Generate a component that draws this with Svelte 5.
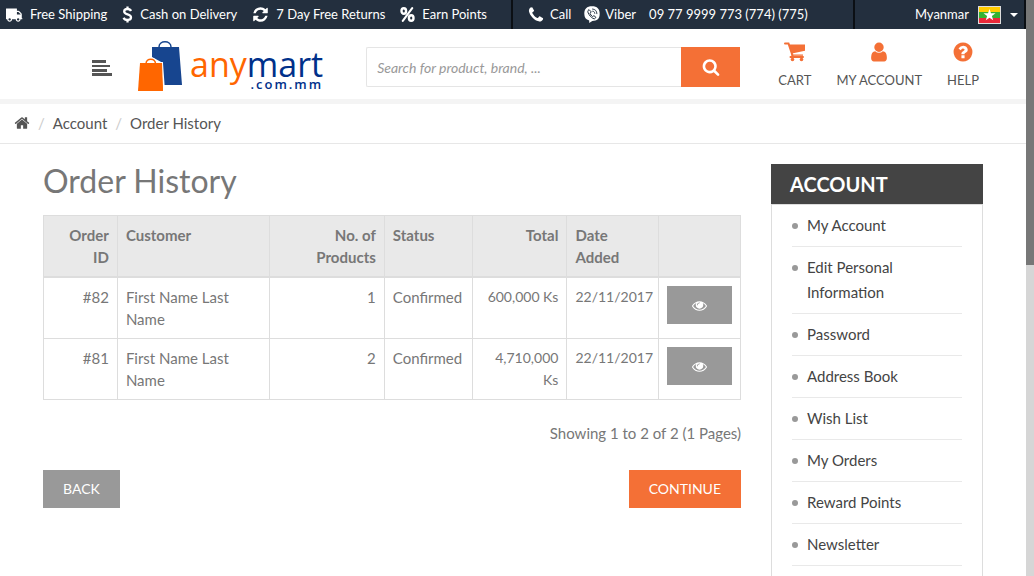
<script>
  const icons = {
    truck: 'M640 1408q0-52-38-90t-90-38-90 38-38 90 38 90 90 38 90-38 38-90zm-384-512h384v-256h-158q-13 0-22 9l-195 195q-9 9-9 22v30zm1280 512q0-52-38-90t-90-38-90 38-38 90 38 90 90 38 90-38 38-90zm256-1088v1024q0 15-4 26.5t-13.5 18.5-16.5 11.5-23.5 6-22.5 2-25.5 0-22.5-.5q0 106-75 181t-181 75-181-75-75-181h-384q0 106-75 181t-181 75-181-75-75-181h-64q-3 0-22.5.5t-25.5 0-22.5-2-23.5-6-16.5-11.5-13.5-18.5-4-26.5q0-26 19-45t45-19v-320q0-8-.5-35t0-38 2.5-34.5 6.5-37 14-30.5 22.5-30l198-198q19-19 50.5-32t58.5-13h160v-192q0-26 19-45t45-19h1024q26 0 45 19t19 45z',
    refresh: 'M1639 1056q0 5-1 7-64 268-268 434.5t-478 166.5q-146 0-282.5-55t-243.5-157l-129 129q-19 19-45 19t-45-19-19-45v-448q0-26 19-45t45-19h448q26 0 45 19t19 45-19 45l-137 137q71 66 161 102t187 36q134 0 250-65t186-179q11-17 53-117 8-23 30-23h192q13 0 22.5 9.5t9.5 22.5zm25-800v448q0 26-19 45t-45 19h-448q-26 0-45-19t-19-45 19-45l138-138q-148-137-349-137-134 0-250 65t-186 179q-11 17-53 117-8 23-30 23h-199q-13 0-22.5-9.5t-9.5-22.5v-7q65-268 270-434.5t480-166.5q146 0 284 55.5t245 156.5l130-129q19-19 45-19t45 19 19 45z',
    phone: 'M1600 1240q0 27-10 70.5t-21 68.5q-21 50-122 106-94 51-186 51-27 0-53-3.5t-57.5-12.5-47-14.5-55.5-20.5-49-18q-98-35-175-83-127-79-264-216t-216-264q-48-77-83-175-3-9-18-49t-20.5-55.5-14.5-47-12.5-57.5-3.5-53q0-92 51-186 56-101 106-122 25-11 68.5-21t70.5-10q14 0 21 3 18 6 53 76 11 19 30 54t35 63.5 31 53.5q3 4 17.5 25t21.5 35.5 7 28.5q0 20-28.5 50t-62 55-62 53-28.5 46q0 9 5 22.5t8.5 20.5 14 24 11.5 19q76 137 174 235t235 174q2 1 19 11.5t24 14 20.5 8.5 22.5 5q18 0 46-28.5t53-62 55-62 50-28.5q14 0 28.5 7t35.5 21.5 25 17.5q25 15 53.5 31t63.5 35 54 30q70 35 76 53 3 7 3 21z',
    magnifier: 'M1216 832q0-185-131.5-316.5t-316.5-131.5-316.5 131.5-131.5 316.5 131.5 316.5 316.5 131.5 316.5-131.5 131.5-316.5zm512 832q0 52-38 90t-90 38q-54 0-90-38l-343-342q-179 124-399 124-143 0-273.5-55.5t-225-150-150-225-55.5-273.5 55.5-273.5 150-225 225-150 273.5-55.5 273.5 55.5 225 150 150 225 55.5 273.5q0 220-124 399l343 343q37 37 37 90z',
    user: 'M1536 1399q0 109-62.5 187t-150.5 78h-854q-88 0-150.5-78t-62.5-187q0-85 8.5-160.5t31.5-152 58.5-131 94-89 134.5-34.5q131 128 313 128t313-128q76 0 134.5 34.5t94 89 58.5 131 31.5 152 8.5 160.5zm-256-887q0 159-112.5 271.5t-271.5 112.5-271.5-112.5-112.5-271.5 112.5-271.5 271.5-112.5 271.5 112.5 112.5 271.5z',
    help: 'M1024 1376v-192q0-14-9-23t-23-9h-192q-14 0-23 9t-9 23v192q0 14 9 23t23 9h192q14 0 23-9t9-23zm256-672q0-88-55.5-163t-138.5-116-170-41q-243 0-371 213-15 24 8 42l132 100q7 6 19 6 16 0 25-12 53-68 86-92 34-24 86-24 48 0 85.5 26t37.5 59q0 38-20 61t-68 45q-63 28-115.5 86.5t-52.5 125.5v36q0 14 9 23t23 9h192q14 0 23-9t9-23q0-19 21.5-49.5t54.5-49.5q32-18 49-28.5t46-35 44.5-48 28-60.5 12.5-81zm384 192q0 209-103 385.5t-279.5 279.5-385.5 103-385.5-103-279.5-279.5-103-385.5 103-385.5 279.5-279.5 385.5-103 385.5 103 279.5 279.5 103 385.5z',
    home: 'M1472 992v480q0 26-19 45t-45 19h-384v-384h-256v384h-384q-26 0-45-19t-19-45v-480q0-1 .5-3t.5-3l575-474 575 474q1 2 1 6zm223-69l-62 74q-8 9-21 11h-3q-13 0-21-7l-692-577-692 577q-12 8-24 7-13-2-21-11l-62-74q-8-10-7-23.5t11-21.5l719-599q32-26 76-26t76 26l244 204v-195q0-14 9-23t23-9h192q14 0 23 9t9 23v408l219 182q10 8 11 21.5t-7 23.5z',
    eye: 'M1664 960q-152-236-381-353 61 104 61 225 0 185-131.5 316.5t-316.5 131.5-316.5-131.5-131.5-316.5q0-121 61-225-229 117-381 353 133 205 333.5 326.5t434.5 121.5 434.5-121.5 333.5-326.5zm-720-384q0-20-14-34t-34-14q-125 0-214.5 89.5t-89.5 214.5q0 20 14 34t34 14 34-14 14-34q0-86 61-147t147-61q20 0 34-14t14-34zm848 384q0 34-20 69-140 230-376.5 368.5t-499.5 138.5-499.5-139-376.5-368q-20-35-20-69t20-69q140-229 376.5-368t499.5-139 499.5 139 376.5 368q20 35 20 69z'
  };

  const orders = [
    { id: '#82', customer: 'First Name Last Name', products: 1, status: 'Confirmed', total: '600,000 Ks', date: '22/11/2017' },
    { id: '#81', customer: 'First Name Last Name', products: 2, status: 'Confirmed', total: '4,710,000 Ks', date: '22/11/2017' }
  ];

  const accountLinks = [
    'My Account', 'Edit Personal Information', 'Password', 'Address Book',
    'Wish List', 'My Orders', 'Reward Points', 'Newsletter'
  ];
</script>

{#snippet icon(name, size)}
  <svg class="icon" class:flipped={name === 'truck'} width={size} height={size} viewBox="0 0 1792 1792" aria-hidden="true"><path d={icons[name]} /></svg>
{/snippet}

<div class="shell">
  <div class="page">
    <div class="topbar">
      <ul class="perks">
        <li>{@render icon('truck', 17)}Free Shipping</li>
        <li>
          <svg class="icon" width="11" height="17" viewBox="0 0 11 17" aria-hidden="true">
            <path d="M9 5C8.400 3.600 7 3 5.500 3 3.600 3 2.200 4 2.200 5.500c0 3.700 6.800 2 6.800 5.800C9 13 7.500 14 5.500 14 3.700 14 2.200 13.200 1.600 11.700M5.500 .5v2.500M5.500 14v2.500" fill="none" stroke="currentColor" stroke-width="2.300" />
          </svg>Cash on Delivery
        </li>
        <li>{@render icon('refresh', 17)}7 Day Free Returns</li>
        <li>
          <svg class="icon" width="15" height="15" viewBox="0 0 15 15" aria-hidden="true">
            <g fill="none" stroke="currentColor" stroke-width="2.400">
              <ellipse cx="3.800" cy="4" rx="2.300" ry="2.700" />
              <ellipse cx="11.200" cy="11" rx="2.300" ry="2.700" />
              <path d="M12.200 1.200 2.800 13.800" stroke-linecap="round" stroke-width="2.100" />
            </g>
          </svg>Earn Points
        </li>
      </ul>
      <div class="contact">
        <a href="#call">{@render icon('phone', 18)}Call</a>
        <a href="#viber">
          <svg class="icon" width="16" height="17" viewBox="0 0 16 17" aria-hidden="true">
            <path d="M8 .3c5.200 0 7.700 2.600 7.700 7.500S13.200 15 8.300 15L5.200 17v-2.500C1.900 13.700.3 11.400.3 7.800.3 2.900 2.800.3 8 .3z" />
            <g fill="none" stroke="#232f3e" stroke-linecap="round">
              <path d="M4.700 3.800c-1.600 1-1 2.600.4 4.800s3.300 3.800 5 4.200c1 .2 2-1.400 1.500-1.900l-1.700-1.200-1.300.9C7.300 9.700 6.400 8.600 6 7.300l1-1.100z" stroke-width="1" />
              <path d="M8.500 3c2.700.2 4.300 1.800 4.400 4.700M8.700 5.200c1.300.1 2 .9 2.100 2.200" stroke-width=".9" />
            </g>
          </svg>Viber
        </a>
        <span>09 77 9999 773 (774) (775)</span>
      </div>
      <button class="language" type="button">
        Myanmar
        <svg width="23" height="18" viewBox="0 0 23 18" aria-hidden="true">
          <path fill="#ddd" d="M0 0h23v18H0z" />
          <path fill="#fecb00" d="M1 1h21v6H1z" />
          <path fill="#34b233" d="M1 6h21v6H1z" />
          <path fill="#ea2839" d="M1 12h21v5H1z" />
          <path fill="#fff" d="m11.500 3 1.500 4.300h4.500l-3.600 2.700 1.300 4.300-3.700-2.600-3.700 2.600L9.100 10 5.500 7.300H10z" />
        </svg>
        <span class="caret"></span>
      </button>
    </div>

    <header>
      <button class="menu" type="button" aria-label="Menu">
        <svg width="21" height="17" viewBox="0 0 21 17" aria-hidden="true">
          <path d="M1 0h14v3H1zM1 5h18v2H1zM1 9h15v3H1zM1 13h20v3H1z" />
        </svg>
      </button>
      <a class="logo" href="#home" aria-label="anymart.com.mm">
        <svg width="45" height="51" viewBox="0 0 45 51" aria-hidden="true">
          <path d="M14 6h27l3 38H25V22L14 16z" fill="#17458f" />
          <path d="M21 8V6c0-7 12-7 12 0v2" fill="none" stroke="#17458f" stroke-width="1.500" />
          <path d="M0 50 2 22h22l2 28z" fill="#ff6600" stroke="#fff" stroke-width="2" />
          <path d="M8 23c0-6 9.500-6 9.500 0" fill="none" stroke="#fff" stroke-width="4" />
          <path d="M2 22h22l1 28H0z" fill="#ff6600" />
          <path d="M8 23c0-6.500 9.500-6.500 9.500 0" fill="none" stroke="#ff6600" stroke-width="1.500" />
        </svg>
        <span class="wordmark">
          <span class="name"><span class="any">any</span>mart</span>
          <span class="domain">.com.mm</span>
        </span>
      </a>
      <form class="search" onsubmit={(e) => e.preventDefault()}>
        <input type="text" aria-label="Search" placeholder="Search for product, brand, ..." />
        <button type="submit" aria-label="Search">{@render icon('magnifier', 18)}</button>
      </form>
      <nav class="shortcuts">
        <a href="#cart">
          <svg class="icon" width="22" height="22" viewBox="0 0 22 22" aria-hidden="true">
            <path d="M1 2.500h3.500L8.500 14.500M6.500 16h12.500" fill="none" stroke="currentColor" stroke-width="2" stroke-linecap="round" />
            <path d="M5 3.500h16v6.300L8 12.500zM7 13.500h12v1.300H7.500z" />
            <circle cx="8.500" cy="18.500" r="1.800" /><circle cx="17.500" cy="18.500" r="1.800" />
          </svg>
          CART
        </a>
        <a href="#account">{@render icon('user', 22)}MY ACCOUNT</a>
        <a href="#help">{@render icon('help', 22)}HELP</a>
      </nav>
    </header>

    <nav class="breadcrumb" aria-label="Breadcrumb">
      <a href="#home" aria-label="Home">{@render icon('home', 16)}</a>
      <i>/</i>
      <a href="#account">Account</a>
      <i>/</i>
      <a href="#orders">Order History</a>
    </nav>

    <div class="content">
      <main>
        <h1>Order History</h1>
        <table>
          <colgroup>
            <col class="c-id" /><col class="c-customer" /><col class="c-products" /><col class="c-status" />
            <col class="c-total" /><col class="c-date" /><col />
          </colgroup>
          <thead>
            <tr>
              <th class="end">Order ID</th>
              <th>Customer</th>
              <th class="end">No. of Products</th>
              <th>Status</th>
              <th class="end">Total</th>
              <th>Date Added</th>
              <td></td>
            </tr>
          </thead>
          <tbody>
            {#each orders as order}
              <tr>
                <td class="end">{order.id}</td>
                <td>{order.customer}</td>
                <td class="end">{order.products}</td>
                <td>{order.status}</td>
                <td class="end figures">{order.total}</td>
                <td class="figures">{order.date}</td>
                <td><a class="view" href="#order" aria-label="View">{@render icon('eye', 15)}</a></td>
              </tr>
            {/each}
          </tbody>
        </table>
        <p class="results">Showing 1 to 2 of 2 (1 Pages)</p>
        <div class="actions">
          <button class="back" type="button">BACK</button>
          <button class="continue" type="button">CONTINUE</button>
        </div>
      </main>

      <aside>
        <h2>ACCOUNT</h2>
        <ul>
          {#each accountLinks as label}
            <li><a href="#account">{label}</a></li>
          {/each}
        </ul>
      </aside>
    </div>
  </div>
  <div class="track"><div class="thumb"></div></div>
</div>

<style>
  :global(body) {
    margin: 0;
    background: #fff;
  }
  .shell {
    display: grid;
    grid-template-columns: 1fr 8px;
    height: 100vh;
    overflow: hidden;
    font: 15px/22px "Gill Sans MT", "Gill Sans", Lato, sans-serif;
    color: #777;
  }
  .shell :global(*) {
    box-sizing: border-box;
  }
  .page {
    min-width: 0;
    overflow: hidden;
  }
  .track {
    background: #d6d6d6;
  }
  .thumb {
    height: 46%;
    background: #777;
  }
  a {
    color: inherit;
    text-decoration: none;
  }
  button {
    border: 0;
    padding: 0;
    font: inherit;
    color: inherit;
    background: none;
  }
  ul {
    list-style: none;
    margin: 0;
    padding: 0;
  }
  .icon {
    fill: currentColor;
    flex: none;
  }
  .flipped {
    transform: scaleX(-1);
  }

  .topbar {
    display: grid;
    grid-template-columns: 3fr 2fr 1fr;
    height: 29px;
    background: #232f3e;
    color: #fff;
    font-size: 13px;
    line-height: 29px;
    white-space: nowrap;
  }
  .topbar > * {
    display: flex;
    align-items: center;
    border-right: 2px solid #0b0f14;
  }
  .perks {
    gap: 15px;
    padding-left: 6px;
  }
  .perks li {
    display: flex;
    align-items: center;
    gap: 7px;
  }
  .contact {
    gap: 13px;
    padding-left: 14px;
  }
  .contact a {
    display: flex;
    align-items: center;
    gap: 5px;
  }
  .language {
    justify-content: flex-end;
    gap: 9px;
    padding-right: 6px;
  }
  .caret {
    border: 4px solid transparent;
    border-top-color: #fff;
    border-bottom: 0;
  }

  header {
    display: flex;
    align-items: flex-start;
    height: 75px;
    padding: 12px 47px 0 91px;
    border-bottom: 5px solid #f4f4f4;
  }
  .menu {
    margin: 19px 26px 0 0;
    display: flex;
    fill: #555;
  }
  .logo {
    display: flex;
    gap: 7px;
  }
  .wordmark {
    display: flex;
    flex-direction: column;
    font-family: "Open Sans", "Noto Sans", sans-serif;
    color: #00308a;
  }
  .name {
    font-size: 34px;
    line-height: 46px;
    height: 34px;
  }
  .any {
    color: #ff6600;
  }
  .domain {
    align-self: flex-end;
    font-size: 13px;
    font-weight: 600;
    line-height: 18px;
    letter-spacing: 2px;
  }
  .search {
    display: flex;
    flex: 1;
    height: 40px;
    margin: 6px 38px 0 43px;
  }
  .search input {
    flex: 1;
    min-width: 0;
    border: 1px solid #e5e5e5;
    border-right: 0;
    border-radius: 2px 0 0 2px;
    padding: 0 10px;
    font: italic 14px "Gill Sans MT", "Gill Sans", Lato, sans-serif;
  }
  .search input::placeholder {
    color: #999;
  }
  .search button {
    display: flex;
    align-items: center;
    justify-content: center;
    width: 59px;
    background: #f47036;
    color: #fff;
  }
  .shortcuts {
    display: flex;
    gap: 25px;
    font-size: 13px;
    color: #555;
  }
  .shortcuts a {
    display: flex;
    flex-direction: column;
    align-items: center;
    gap: 6px;
  }
  .shortcuts .icon {
    color: #f47036;
  }

  .breadcrumb {
    display: flex;
    align-items: center;
    gap: 8px;
    height: 40px;
    padding: 0 14px 2px;
    border-bottom: 1px solid #e7e7e7;
    color: #555;
  }
  .breadcrumb a {
    display: flex;
  }
  .breadcrumb i {
    font-style: normal;
    color: #ccc;
  }

  .content {
    display: grid;
    grid-template-columns: 1fr 212px;
    gap: 30px;
    align-items: start;
    padding: 20px 43px 0;
  }
  h1 {
    margin: 0 0 17px;
    font-size: 32px;
    font-weight: 400;
    line-height: 34px;
  }
  table {
    width: 100%;
    table-layout: fixed;
    border-collapse: collapse;
  }
  .c-id { width: 10.6%; }
  .c-customer { width: 21.8%; }
  .c-products { width: 16.5%; }
  .c-status { width: 12.6%; }
  .c-total { width: 13.6%; }
  .c-date { width: 13.1%; }
  th,
  td {
    padding: 8px;
    border: 1px solid #ddd;
    text-align: left;
    vertical-align: top;
  }
  thead {
    background: #e9e9e9;
  }
  thead th,
  thead td {
    border-bottom-width: 2px;
  }
  th.end,
  td.end {
    text-align: right;
  }
  .figures {
    font-size: 14px;
  }
  .view {
    display: grid;
    place-items: center;
    height: 38px;
    background: #999;
    color: #fff;
  }
  .results {
    margin: 22px 0 26px;
    text-align: right;
  }
  .actions {
    display: flex;
    justify-content: space-between;
  }
  .actions button {
    height: 38px;
    padding: 0 20px;
    font-size: 14px;
    color: #fff;
  }
  .actions .back {
    background: #999;
  }
  .actions .continue {
    background: #f47036;
  }

  aside h2 {
    margin: 0;
    padding: 0 19px;
    background: #444;
    color: #fff;
    font-size: 20px;
    line-height: 40px;
  }
  aside ul {
    padding: 0 20px 20px;
    border: 1px solid #ddd;
  }
  aside li {
    display: flex;
    gap: 9px;
    padding: 8px 0;
    border-bottom: 1px solid #e9e9e9;
    color: #444;
    line-height: 25px;
  }
  aside li::before {
    content: "";
    flex: none;
    width: 6px;
    height: 6px;
    margin-top: 10px;
    border-radius: 50%;
    background: #999;
  }
</style>
